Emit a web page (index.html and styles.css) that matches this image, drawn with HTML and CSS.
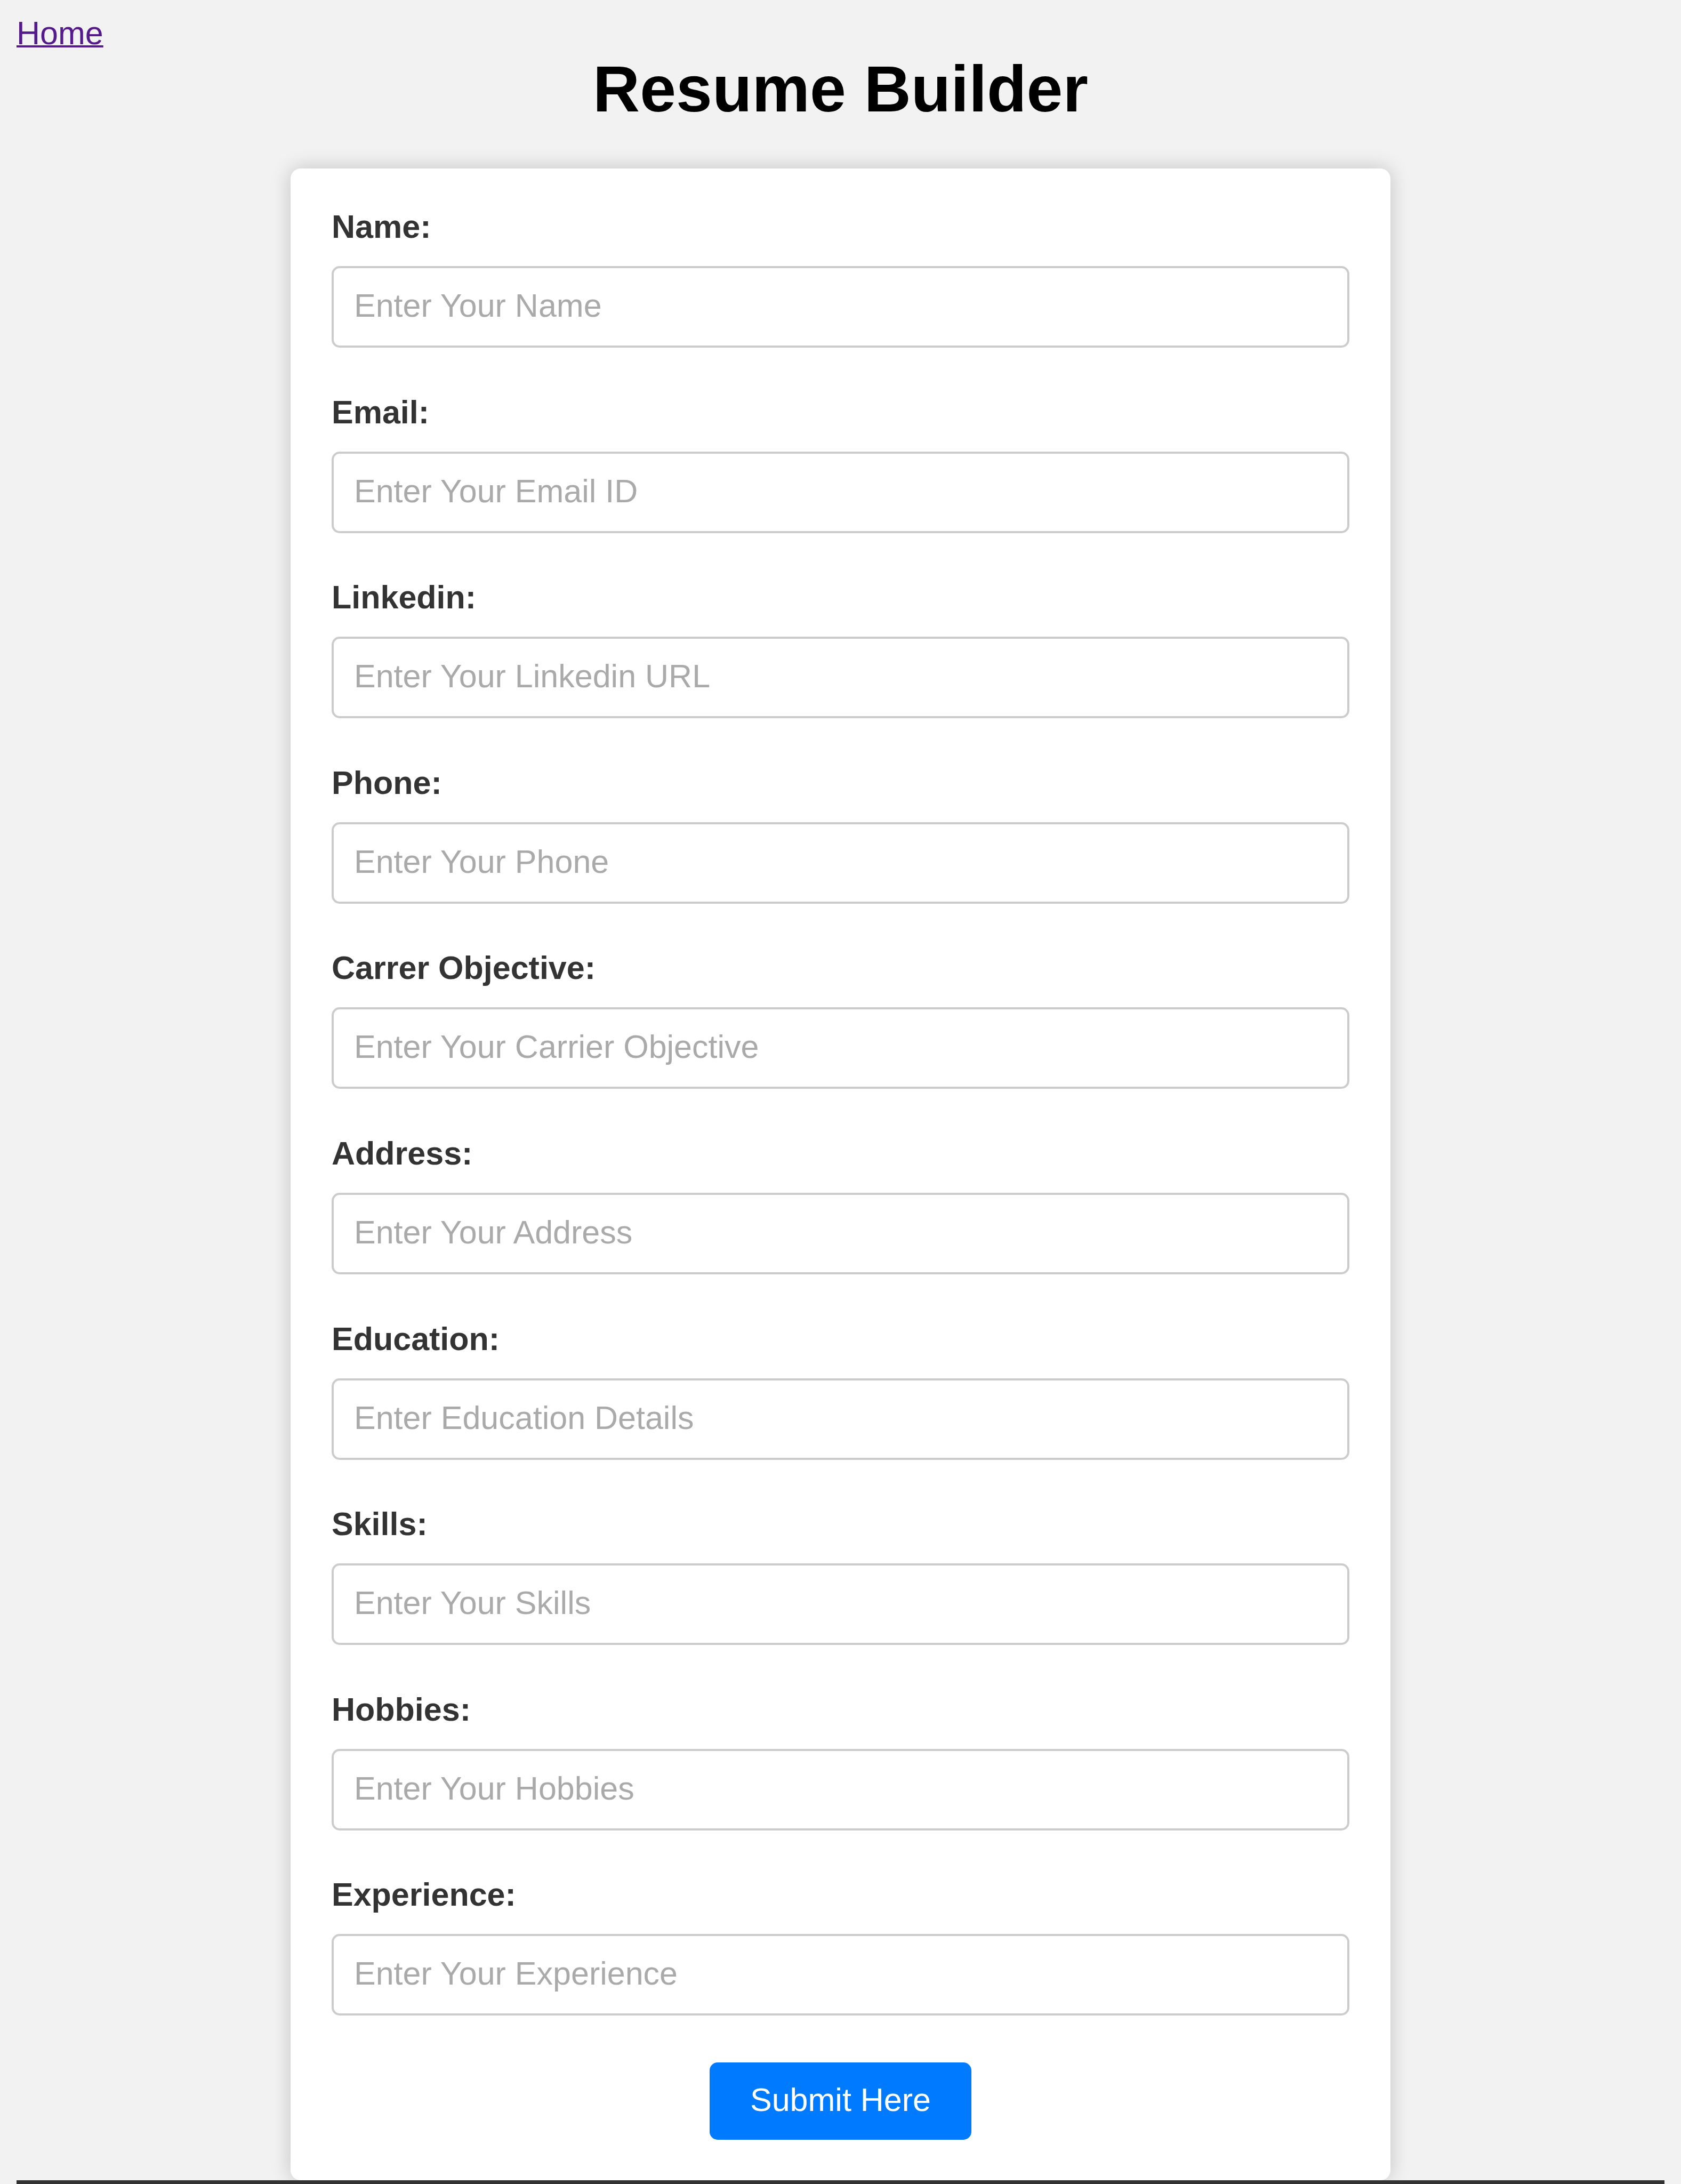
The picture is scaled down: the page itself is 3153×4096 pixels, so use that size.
FILE: index.html
```html
<!DOCTYPE html>
<html lang="en">
<head>
  <meta charset="utf-8">
  <title>Resume Builder</title>
  <link rel="stylesheet" href="styles.css">
</head>
<body>
  <nav class="nav"><a class="home-link" href="#">Home</a></nav>
  <h1 class="title">Resume Builder</h1>
  <form class="form">
    <div class="field">
      <label class="label" for="name">Name:</label>
      <input class="input" type="text" id="name" placeholder="Enter Your Name">
    </div>
    <div class="field">
      <label class="label" for="email">Email:</label>
      <input class="input" type="email" id="email" placeholder="Enter Your Email ID">
    </div>
    <div class="field">
      <label class="label" for="linkedin">Linkedin:</label>
      <input class="input" type="url" id="linkedin" placeholder="Enter Your Linkedin URL">
    </div>
    <div class="field">
      <label class="label" for="phone">Phone:</label>
      <input class="input" type="tel" id="phone" placeholder="Enter Your Phone">
    </div>
    <div class="field">
      <label class="label" for="objective">Carrer Objective:</label>
      <input class="input" type="text" id="objective" placeholder="Enter Your Carrier Objective">
    </div>
    <div class="field">
      <label class="label" for="address">Address:</label>
      <input class="input" type="text" id="address" placeholder="Enter Your Address">
    </div>
    <div class="field">
      <label class="label" for="education">Education:</label>
      <input class="input" type="text" id="education" placeholder="Enter Education Details">
    </div>
    <div class="field">
      <label class="label" for="skills">Skills:</label>
      <input class="input" type="text" id="skills" placeholder="Enter Your Skills">
    </div>
    <div class="field">
      <label class="label" for="hobbies">Hobbies:</label>
      <input class="input" type="text" id="hobbies" placeholder="Enter Your Hobbies">
    </div>
    <div class="field">
      <label class="label" for="experience">Experience:</label>
      <input class="input" type="text" id="experience" placeholder="Enter Your Experience">
    </div>
    <button class="submit" type="submit">Submit Here</button>
  </form>
  <footer class="footer"></footer>
</body>
</html>
```

FILE: styles.css
```css
* {
  box-sizing: border-box;
}

body {
  display: flex;
  flex-direction: column;
  min-height: 100vh;
  margin: 0;
  padding: 28px 31px 0;
  background: #f2f2f2;
  font-family: "Liberation Sans", Arial, sans-serif;
  font-size: 61px;
  line-height: 68px;
}

.home-link {
  color: #551a8b;
  text-decoration-thickness: 4px;
}

.title {
  margin: 0 0 78px;
  font-size: 122px;
  line-height: 142px;
  text-align: center;
}

/* The fields share the card's free height evenly */
.form {
  flex: 1;
  display: flex;
  flex-direction: column;
  justify-content: space-between;
  align-self: center;
  width: 100%;
  max-width: 2063px;
  padding: 76px 77px;
  border-radius: 19px;
  background: #fff;
  box-shadow: 0 0 38px rgba(0, 0, 0, 0.2);
}

.field {
  display: flex;
  flex-direction: column;
  gap: 41px;
}

.label {
  color: #333;
  font-weight: bold;
  line-height: 66px;
}

.input {
  width: 100%;
  padding: 36px 38px 41px;
  border: 4px solid #ccc;
  border-radius: 15px;
  background: #fff;
  font: inherit;
}

.input::placeholder {
  color: #aaa;
}

.submit {
  align-self: center;
  padding: 36px 76px 41px;
  border: 0;
  border-radius: 15px;
  background: #007bff;
  color: #fff;
  font: inherit;
}

.footer {
  position: relative;
  height: 7px;
  background: #333;
}
```
